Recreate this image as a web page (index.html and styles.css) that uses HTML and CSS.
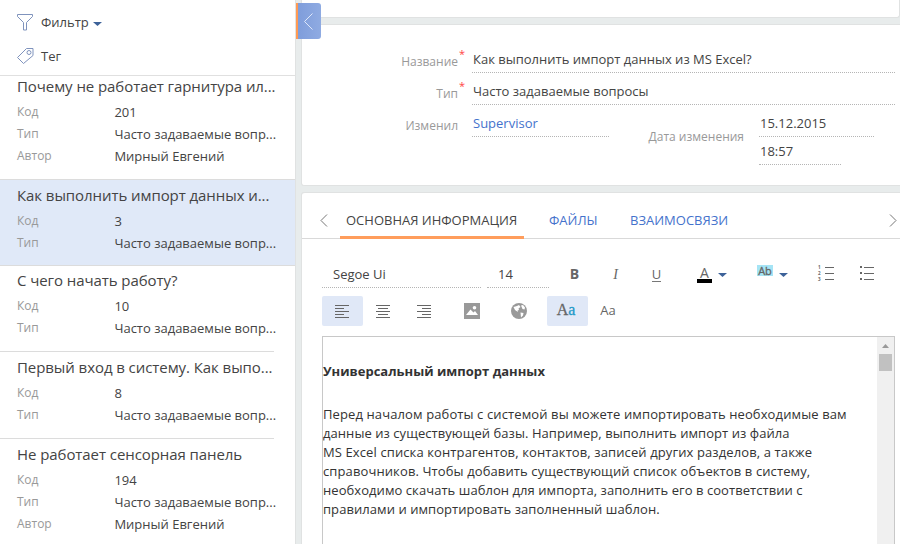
FILE: index.html
```html
<!DOCTYPE html>
<html lang="ru">
<head>
<meta charset="utf-8">
<title>База знаний</title>
<link rel="stylesheet" href="styles.css">
</head>
<body>
<div class="app">
  <aside class="sidebar">
    <div class="filters">
      <div class="filter">
        <svg class="filter-icon" width="16" height="17" viewBox="0 0 16 17"><path d="M.5.5h15v2L9.500 8.500v7.500h-3V8.500L.5 2.500z"/></svg>
        <span class="t-filter">Фильтр</span>
        <svg class="caret" width="9" height="4" viewBox="0 0 9 4"><path d="M0 0h9L4.500 4z"/></svg>
      </div>
      <div class="filter">
        <svg class="filter-icon" width="17" height="17" viewBox="0 0 17 17"><path d="M9.500.5H16v7L6.500 15.500.5 9.500z"/><circle cx="12" cy="4.500" r="2"/></svg>
        <span class="t-tag">Тег</span>
      </div>
    </div>
    <div class="item item-first">
      <h3>Почему не работает гарнитура ил...</h3>
      <div class="row"><span class="key">Код</span><span class="val">201</span></div>
      <div class="row"><span class="key">Тип</span><span class="val">Часто задаваемые вопр...</span></div>
      <div class="row"><span class="key">Автор</span><span class="val">Мирный Евгений</span></div>
    </div>
    <div class="item item-active">
      <h3>Как выполнить импорт данных и...</h3>
      <div class="row"><span class="key">Код</span><span class="val">3</span></div>
      <div class="row"><span class="key">Тип</span><span class="val">Часто задаваемые вопр...</span></div>
    </div>
    <div class="item item-third">
      <h3>С чего начать работу?</h3>
      <div class="row"><span class="key">Код</span><span class="val">10</span></div>
      <div class="row"><span class="key">Тип</span><span class="val">Часто задаваемые вопр...</span></div>
    </div>
    <div class="item">
      <h3>Первый вход в систему. Как выпо...</h3>
      <div class="row"><span class="key">Код</span><span class="val">8</span></div>
      <div class="row"><span class="key">Тип</span><span class="val">Часто задаваемые вопр...</span></div>
    </div>
    <div class="item">
      <h3>Не работает сенсорная панель</h3>
      <div class="row"><span class="key">Код</span><span class="val">194</span></div>
      <div class="row"><span class="key">Тип</span><span class="val">Часто задаваемые вопр...</span></div>
      <div class="row"><span class="key">Автор</span><span class="val">Мирный Евгений</span></div>
    </div>
  </aside>

  <main class="content">
    <button class="collapse" type="button"><svg width="9" height="17" viewBox="0 0 9 17"><path d="M8.500.5l-8 8 8 8"/></svg></button>
    <section class="card card-top"></section>

    <section class="card card-form">
      <div class="field">
        <label>Название<i class="req">*</i></label>
        <div class="input">Как выполнить импорт данных из MS Excel?</div>
      </div>
      <div class="field">
        <label>Тип<i class="req">*</i></label>
        <div class="input">Часто задаваемые вопросы</div>
      </div>
      <div class="field">
        <label>Изменил</label>
        <div class="input input-user">Supervisor</div>
        <label class="label-date">Дата изменения</label>
        <div class="dates">
          <div class="input input-date">15.12.2015</div>
          <div class="input input-time">18:57</div>
        </div>
      </div>
    </section>

    <section class="card card-main">
      <nav class="tabs">
        <svg class="arrow arrow-prev" width="8" height="13" viewBox="0 0 8 13"><path d="M7 .5l-6 6 6 6"/></svg>
        <a class="tab tab-active">ОСНОВНАЯ ИНФОРМАЦИЯ</a>
        <a class="tab tab-files">ФАЙЛЫ</a>
        <a class="tab tab-links">ВЗАИМОСВЯЗИ</a>
        <svg class="arrow arrow-next" width="8" height="13" viewBox="0 0 8 13"><path d="M1 .5l6 6-6 6"/></svg>
      </nav>

      <div class="tools tools-font">
        <div class="select select-font"><span>Segoe Ui</span></div>
        <div class="select select-size"><span>14</span></div>
        <span class="tool"><b class="bold">B</b></span>
        <span class="tool"><i class="italic">I</i></span>
        <span class="tool"><span class="underline">U</span></span>
        <span class="tool tool-color"><span class="color">A</span><svg class="caret" width="9" height="4" viewBox="0 0 9 4"><path d="M0 0h9L4.500 4z"/></svg></span>
        <span class="tool tool-mark"><span class="mark">Ab</span><svg class="caret" width="9" height="4" viewBox="0 0 9 4"><path d="M0 0h9L4.500 4z"/></svg></span>
        <span class="tool tool-ol">
          <span class="nums"><i>1</i><i>2</i><i>3</i></span>
          <svg width="9" height="15" viewBox="0 0 9 15"><path class="lines" d="M0 1.500h9M0 7.500h9M0 13.500h9"/></svg>
        </span>
        <span class="tool tool-ul"><svg width="14" height="15" viewBox="0 0 14 15"><path class="dots" d="M0 0h2v2H0zM0 6h2v2H0zM0 12h2v2H0z"/><path class="lines" d="M4 1.500h10M4 7.500h10M4 13.500h10"/></svg></span>
      </div>

      <div class="tools tools-align">
        <span class="btn btn-on"><svg width="14" height="13" viewBox="0 0 14 13"><path class="lines" d="M0 .5h14M0 3.500h9M0 6.500h14M0 9.500h9M0 12.500h14"/></svg></span>
        <span class="btn"><svg width="14" height="13" viewBox="0 0 14 13"><path class="lines" d="M0 .5h14M2 3.500h10M0 6.500h14M2 9.500h10M0 12.500h14"/></svg></span>
        <span class="btn"><svg width="14" height="13" viewBox="0 0 14 13"><path class="lines" d="M0 .5h14M5 3.500h9M0 6.500h14M5 9.500h9M0 12.500h14"/></svg></span>
        <span class="btn btn-image"><svg width="16" height="16" viewBox="0 0 16 16"><path class="solid" d="M0 0h16v16H0z"/><path class="cut" d="M2 12L6.500 6.500l3 3 1.500-1.500 3 4z"/><circle class="cut" cx="10.500" cy="4.800" r="1.800"/></svg></span>
        <span class="btn btn-globe"><svg width="16" height="16" viewBox="0 0 16 16"><circle class="solid" cx="8" cy="8" r="8"/><path class="cut" d="M2.500 4L6 3l2-1 1.500 2L7.500 5.500 8 7 6.500 7.500 7 9 5.500 8 4 7zM10 2.500l2-.5 2 2.500-.5 2-2-.5zM9.500 9.500l3 .5-.5 2.500L10 14.500z"/></svg></span>
        <span class="btn btn-on btn-aa"><span class="serif-aa">A<em>a</em></span></span>
        <span class="btn"><span class="plain-aa">Aa</span></span>
      </div>

      <div class="editor">
        <article class="doc">
          <h2>Универсальный импорт данных</h2>
          <p>
            <span class="line-wide">Перед началом работы с системой вы можете импортировать необходимые вам</span><br>
            данные из существующей базы. Например, выполнить импорт из файла<br>
            <span class="line-wide">MS Excel списка контрагентов, контактов, записей других разделов, а также</span><br>
            <span class="line-wide">справочников. Чтобы добавить существующий список объектов в систему,</span><br>
            необходимо скачать шаблон для импорта, заполнить его в соответствии с<br>
            правилами и импортировать заполненный шаблон.
          </p>
        </article>
        <div class="scrollbar"><svg width="7" height="4" viewBox="0 0 7 4"><path d="M0 4h7L3.500 0z"/></svg><div class="thumb"></div></div>
      </div>
    </section>
  </main>
</div>
</body>
</html>
```
FILE: styles.css
```css
* { box-sizing: border-box; }
body { margin: 0; overflow: hidden; background: #e8ecec; color: #444; font: 13px/22px "Open Sans", "Noto Sans", sans-serif; }
svg { display: block; flex: none; overflow: visible; }
.app { display: flex; width: 900px; height: 544px; overflow: hidden; }

/* Record list */
.sidebar { width: 296px; flex: none; background: #fff; border-right: 1px solid #e0e2e2; white-space: nowrap; }
.filters { height: 76px; padding: 11px 17px 0; border-bottom: 1px solid #e0e0e0; display: flex; flex-direction: column; gap: 12px; }
.filter { display: flex; align-items: center; height: 22px; }
.filter span { margin-left: 7px; width: 47px; }
.filter .filter-icon + .t-filter { margin-left: 8px; }
.filter-icon { fill: none; stroke: #7f93bd; }
.caret { fill: #3d6299; margin: 3px 0 0 5px; }
.item { padding: 4px 0 12px 17px; width: 274px; border-bottom: 1px solid #dcdcdc; }
.item:last-child { border: 0; }
.item-first { padding-top: 0; width: 295px; }
.item-active { background: #e0e9f8; width: 295px; padding-bottom: 11px; }
.item-third { padding-top: 3px; }
.item h3 { margin: 0 0 4px; font-size: 15px; font-weight: 400; line-height: 22px; letter-spacing: -.07px; }
.item-first h3 { margin: -1px 0 4px; }
.row { display: flex; height: 22px; }
.key { width: 97px; flex: none; color: #999; font-size: 12px; line-height: 21px; }
.val { padding-left: .4px; }

/* Record page */
.content { position: relative; width: 604px; height: 552px; padding-left: 6px; display: flex; flex-direction: column; gap: 6px; }
.card { flex: none; background: #fff; border: 1px solid #e0e2e2; border-left: 0; border-radius: 3px; box-shadow: -1px 0 #e0e2e2; }
.card-top { height: 18px; border-top: 0; border-radius: 0 0 3px 3px; }
.card-form { height: 162px; margin-right: -5px; padding: 22px 0 0 1px; }
.card-main { height: 360px; margin-right: -5px; }
.collapse { position: absolute; left: 0; top: 3px; width: 25px; height: 36px; padding: 0 0 0 6px; border: 0; border-left: 2px solid #ff9a53; border-radius: 0 3px 3px 0; background: linear-gradient(90deg, #7f9ddb, #8fabe2); }
.collapse svg { fill: none; stroke: #dfe8fa; }
.field { display: flex; height: 32px; }
.field label { position: relative; width: 155px; flex: none; text-align: right; color: #999; font-size: 12px; line-height: 30px; }
.req { position: absolute; left: 156px; top: -8px; color: #f44; font-style: normal; font-size: 11px; }
.input { flex: none; width: 423px; height: 26px; margin-left: 14px; padding-left: 1px; border-bottom: 1px dotted #b5b5b5; line-height: 24px; }
.input-user { width: 137px; color: #4472cc; }
.field .label-date { width: 135px; margin-top: 11px; }
.dates { display: flex; flex-direction: column; gap: 2px; margin-left: 1px; }
.input-date { width: 115px; }
.input-time { width: 82px; }

/* Tabs */
.tabs { display: flex; height: 46px; padding-left: 18px; border-bottom: 1px solid #d9d9d9; color: #4472cc; white-space: nowrap; }
.arrow { fill: none; stroke: #777; margin-top: 21px; }
.arrow-next { margin-left: 31px; }
.tab { height: 46px; padding-top: 16px; line-height: 22px; }
.tab-active { width: 184px; margin-left: 12px; padding-left: 6px; border-bottom: 3px solid #ff9d5c; color: #444; }
.tab-files { width: 81px; margin-left: 25px; }
.tab-links { width: 228px; }

/* Formatting tools */
.tools { display: flex; margin-left: 20px; color: #666; }
.tools-font { height: 33px; margin-top: 16px; }
.select { height: 33px; border-bottom: 1px dotted #b5b5b5; padding: 8px 0 0 11px; color: #444; }
.select-font { width: 159px; }
.select-size { width: 62px; margin-left: 6px; }
.tool { width: 41px; display: flex; justify-content: center; padding-top: 8px; }
.select-size + .tool { margin-left: 5px; }
.bold { font-size: 14px; }
.italic { font: italic 14px/24px "Liberation Serif", serif; }
.underline { height: 19px; font-size: 13px; border-bottom: 1px solid #777; }
.tool-color { width: 30px; margin-left: 20px; padding-top: 9px; justify-content: flex-start; }
.color { width: 17px; height: 19px; font-size: 14px; line-height: 17px; text-align: center; border-bottom: 4px solid #000; }
.tool .caret { margin: 9px 0 0 6px; }
.tool-mark { width: 32px; margin-left: 30px; padding-top: 11px; justify-content: flex-start; }
.mark { width: 16px; height: 11px; margin-top: -1px; font: 11px/12px "Open Sans", sans-serif; text-align: center; background: #a5e4f5; -webkit-text-stroke: .3px; }
.tool-mark .caret { margin-top: 7px; }
.tool-ol { width: 16px; margin-left: 29px; padding-top: 11px; justify-content: flex-start; gap: 3px; }
.nums { display: flex; flex-direction: column; width: 4px; margin-top: -2px; }
.nums i { height: 6px; font: bold 4.500px/6px "Open Sans", sans-serif; }
.tool-ul { width: 14px; margin-left: 26px; padding-top: 11px; }
.lines { stroke: #666; }
.dots { fill: #666; }
.tools-align { height: 30px; margin-top: 8px; }
.btn { width: 41px; height: 30px; display: flex; align-items: center; justify-content: center; border-radius: 2px; padding-right: 1px; }
.btn-on { background: #e0e8f7; }
.btn-image { margin-left: 7px; }
.btn-globe { margin-left: 6px; }
.btn-aa { margin-left: 7px; }
.plain-aa { margin-top: -2px; }
.solid { fill: #999; }
.cut { fill: #fff; }
.serif-aa { margin: -2px 2px 0 0; font: 16px/28px "Liberation Serif", serif; -webkit-text-stroke: .3px; }
.serif-aa em { color: #2199c7; font-style: normal; }

/* Text editor */
.editor { display: flex; width: 573px; height: 220px; margin: 10px 0 0 20px; border: 1px solid #c8c8c8; border-bottom: 0; }
.doc { width: 554px; flex: none; color: #333; white-space: nowrap; font: 13px/19px "Open Sans", "Noto Sans", sans-serif; }
.doc h2 { margin: 25px 0 0; font-size: 13px; line-height: 19px; }
.doc p { margin: 24px 0 0; letter-spacing: .06px; }
.line-wide { letter-spacing: .11px; }
.scrollbar { width: 17px; background: #f0f0f0; padding: 7px 2px 0; }
.scrollbar svg { margin: 0 auto; fill: #999; }
.thumb { width: 13px; height: 17px; margin-top: 6px; background: #c1c1c1; }
```
